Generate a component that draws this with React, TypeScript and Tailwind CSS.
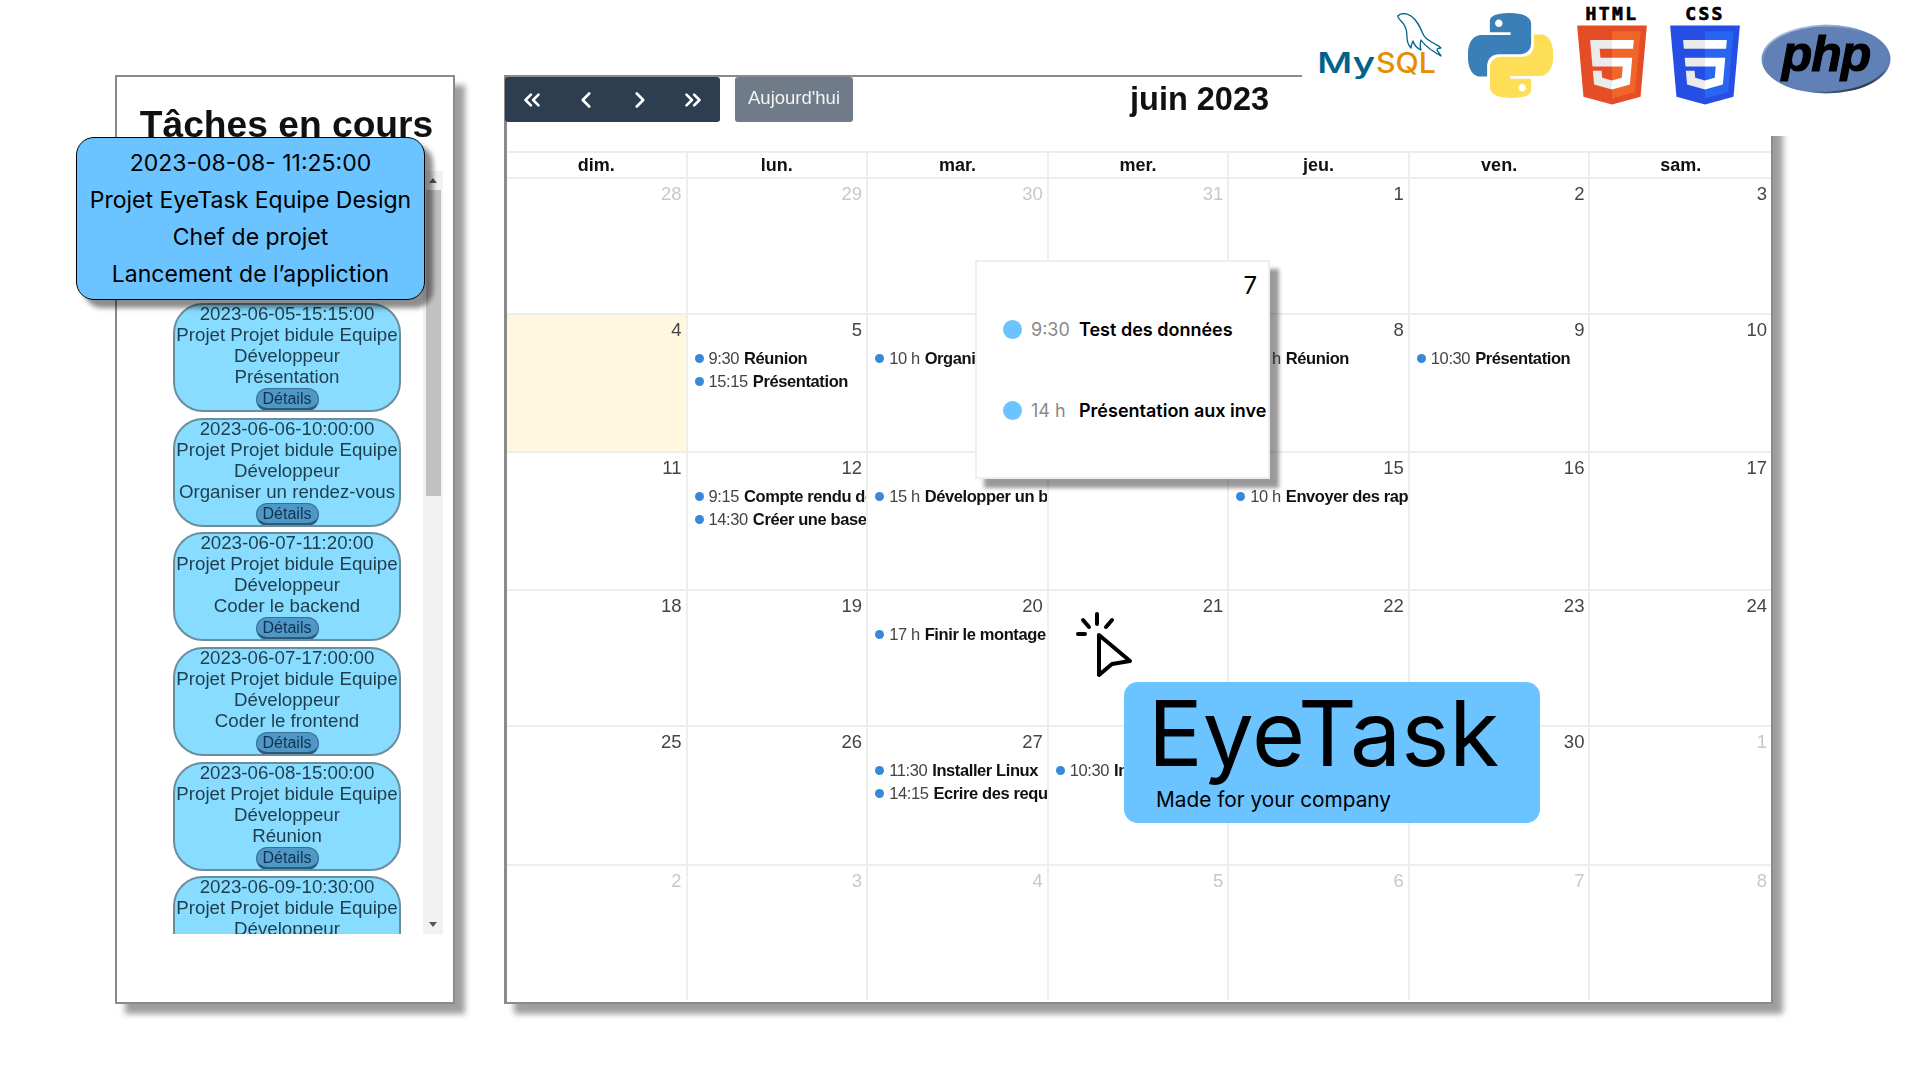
import { ChevronLeft, ChevronRight, ChevronsLeft, ChevronsRight } from "lucide-react";

type Ev = [string, string];
type Cell = { d: number; off?: boolean; today?: boolean; ev?: Ev[] };

const rows: { h: string; cells: Cell[] }[] = [
  { h: "h-[136px]", cells: [{ d: 28, off: true }, { d: 29, off: true }, { d: 30, off: true }, { d: 31, off: true }, { d: 1 }, { d: 2 }, { d: 3 }] },
  {
    h: "h-[138px]",
    cells: [
      { d: 4, today: true },
      { d: 5, ev: [["9:30", "Réunion"], ["15:15", "Présentation"]] },
      { d: 6, ev: [["10 h", "Organiser un rendez-vous"]] },
      { d: 7 },
      { d: 8, ev: [["15 h", "Réunion"]] },
      { d: 9, ev: [["10:30", "Présentation"]] },
      { d: 10 },
    ],
  },
  {
    h: "h-[138px]",
    cells: [
      { d: 11 },
      { d: 12, ev: [["9:15", "Compte rendu de réunion"], ["14:30", "Créer une base"]] },
      { d: 13, ev: [["15 h", "Développer un back"]] },
      { d: 14 },
      { d: 15, ev: [["10 h", "Envoyer des rapports"]] },
      { d: 16 },
      { d: 17 },
    ],
  },
  {
    h: "h-[136px]",
    cells: [{ d: 18 }, { d: 19 }, { d: 20, ev: [["17 h", "Finir le montage"]] }, { d: 21 }, { d: 22 }, { d: 23 }, { d: 24 }],
  },
  {
    h: "h-[139px]",
    cells: [
      { d: 25 },
      { d: 26 },
      { d: 27, ev: [["11:30", "Installer Linux"], ["14:15", "Ecrire des requêtes"]] },
      { d: 28, ev: [["10:30", "Installer"]] },
      { d: 29 },
      { d: 30 },
      { d: 1, off: true },
    ],
  },
];

const lastRow = [2, 3, 4, 5, 6, 7, 8];
const days = ["dim.", "lun.", "mar.", "mer.", "jeu.", "ven.", "sam."];

const tasks = [
  ["2023-06-05-15:15:00", "Présentation"],
  ["2023-06-06-10:00:00", "Organiser un rendez-vous"],
  ["2023-06-07-11:20:00", "Coder le backend"],
  ["2023-06-07-17:00:00", "Coder le frontend"],
  ["2023-06-08-15:00:00", "Réunion"],
  ["2023-06-09-10:30:00", "Présentation"],
];

const sans = "font-['Liberation_Sans',Arial,sans-serif]";
const inter = "font-['Inter',sans-serif]";

function TaskCard({ when, what }: { when: string; what: string }) {
  return (
    <div className="w-[228px] h-[109px] shrink-0 flex flex-col items-center rounded-[30px] border-2 border-[#6b8e9e] bg-[#87dcff] text-[18.7px] leading-[21px] text-[#1f3d4b] text-center overflow-hidden">
      <div className="-mt-[2px]">{when}</div>
      <div className="whitespace-nowrap">Projet Projet bidule Equipe</div>
      <div>Développeur</div>
      <div className="whitespace-nowrap">{what}</div>
      <div className="mt-[1px] w-[63px] h-[23px] rounded-full bg-[#4f97c6] border border-[#3a6f92] border-b-[3px] border-b-[#2d5a78] text-[16px] leading-[20px] font-medium text-[#0f3350]">
        Détails
      </div>
    </div>
  );
}

function TaskPanel() {
  return (
    <div className="w-[340px] h-[929px] shrink-0 bg-white border-2 border-[#8b8b8b] shadow-[10px_10px_6px_rgba(0,0,0,0.38)]">
      <div className={`blur-[0.5px] ${sans}`}>
        <h1 className="pt-[26px] pl-[3px] h-[94px] text-center text-[37.2px] leading-[42px] font-bold text-[#111] whitespace-nowrap">Tâches en cours</h1>
        <div className="flex h-[763px]">
          <div className="ml-[56px] w-[250px] h-full overflow-hidden flex flex-col gap-[5.7px] pt-[132px]">
            {tasks.map(([a, b]) => (
              <TaskCard key={a} when={a} what={b} />
            ))}
          </div>
          <div className="w-[20px] h-full bg-[#f1f1f1] flex flex-col items-center">
            <div className="h-[19px] flex items-center justify-center shrink-0">
              <div className="w-0 h-0 border-x-[4px] border-x-transparent border-b-[5px] border-b-[#555]" />
            </div>
            <div className="w-[15px] h-[306px] bg-[#c1c1c1]" />
            <div className="flex-1" />
            <div className="h-[19px] flex items-center justify-center shrink-0">
              <div className="w-0 h-0 border-x-[4px] border-x-transparent border-t-[5px] border-t-[#555]" />
            </div>
          </div>
        </div>
      </div>
    </div>
  );
}

function Calendar() {
  return (
    <div className="w-[1269px] h-[929px] shrink-0 bg-white border-2 border-l-[3px] border-[#8b8b8b] shadow-[10px_10px_6px_rgba(0,0,0,0.38)]">
      <div className={`blur-[0.5px] ${sans}`}>
        <div className="h-[74px] flex items-start -ml-[2px]">
          <div className="w-[215px] h-[45px] bg-[#2c3e50] rounded-[3px] flex items-center text-white">
            <div className="w-[54px] flex justify-center"><ChevronsLeft size={26} strokeWidth={2.4} /></div>
            <div className="w-[54px] flex justify-center"><ChevronLeft size={26} strokeWidth={2.4} /></div>
            <div className="w-[53px] flex justify-center"><ChevronRight size={26} strokeWidth={2.4} /></div>
            <div className="w-[54px] flex justify-center"><ChevronsRight size={26} strokeWidth={2.4} /></div>
          </div>
          <div className="ml-[15px] w-[118px] h-[45px] bg-[#6f7b89] rounded-[3px] text-center text-[18.5px] leading-[42px] text-[#f3f3f3]">
            Aujourd'hui
          </div>
          <div className="ml-[277px] mt-[2px] text-[32.5px] leading-[40px] font-bold text-[#111]">juin 2023</div>
        </div>
        <div className="grid grid-cols-7 h-[28px] border-y-2 border-[#eee]">
          {days.map((d) => (
            <div key={d} className="border-r-2 border-[#eee] last:border-r-0 text-center text-[18px] leading-[24px] font-bold text-[#111]">
              {d}
            </div>
          ))}
        </div>
        {rows.map((r, i) => (
          <div key={i} className={`grid grid-cols-7 ${r.h}`}>
            {r.cells.map((c, j) => (
              <div
                key={j}
                className={`min-w-0 overflow-hidden border-r-2 border-b-2 border-[#eee] last:border-r-0 ${c.today ? "bg-[#fff8de]" : ""}`}
              >
                <div className={`h-[32px] pr-[4px] pt-[3px] text-right text-[18.5px] leading-[24px] ${c.off ? "text-[#c8c8c8]" : "text-[#444]"}`}>
                  {c.d}
                </div>
                {c.ev?.map(([t, n]) => (
                  <div key={n} className="h-[23px] flex items-center pl-[7px] whitespace-nowrap text-[16.5px] tracking-[-0.4px]">
                    <span className="w-[9px] h-[9px] rounded-full bg-[#3788d8] shrink-0 mr-[5px]" />
                    <span className="text-[#444] mr-[5px]">{t}</span>
                    <span className="font-bold text-[#111]">{n}</span>
                  </div>
                ))}
              </div>
            ))}
          </div>
        ))}
        <div className="grid grid-cols-7 h-[134px]">
          {lastRow.map((d) => (
            <div key={d} className="border-r-2 border-[#eee] last:border-r-0">
              <div className="h-[31px] pr-[4px] pt-[3px] text-right text-[18.5px] leading-[24px] text-[#c8c8c8]">{d}</div>
            </div>
          ))}
        </div>
      </div>
    </div>
  );
}

function MySqlLogo() {
  const font = "'Inter', sans-serif";
  return (
    <svg width="126" height="66" viewBox="0 0 126 66" className="shrink-0">
      <g transform="translate(80 0)" fill="none" stroke="#00618a" strokeWidth="1.3" strokeLinejoin="round" strokeLinecap="round">
        <path d="M0.7 3 C4 0 9 0 14 3 C20 7 23 14 26 21 C28 26 33 28 38 31 C40 32 43 33 44 35 C41 35 40 36 40 37 C41 39 43 41 44 43 C40 41 36 38 33 36 C29 33 26 30 24 27 C23 31 23 34 24 37 C20 35 17 32 16 28 C15 30 14 32 14 35 C11 32 10 28 10 24 C10 18 9 13 5 9 C3 7 1 5 0.7 3 Z" />
      </g>
      <text x="0" y="60" fontFamily={font} fontWeight="500" fontSize="28" fill="#00618a" stroke="#00618a" strokeWidth="0.2" textLength="58" lengthAdjust="spacingAndGlyphs">My</text>
      <text x="59" y="60" fontFamily={font} fontWeight="500" fontSize="28" fill="#e48e00" textLength="60" lengthAdjust="spacingAndGlyphs">SQL</text>
    </svg>
  );
}

function PythonLogo() {
  return (
    <svg width="85" height="85" viewBox="0 0 24 24" className="shrink-0">
      <path fill="#3a7fb8" fillRule="evenodd" d="M14.25.18l.9.2.73.26.59.3.45.32.34.34.25.34.16.33.1.3.04.26.02.2-.01.13V8.5l-.05.63-.13.55-.21.46-.26.38-.3.31-.33.25-.35.19-.35.14-.33.1-.3.07-.26.04-.21.02H8.77l-.69.05-.59.14-.5.22-.41.27-.33.32-.27.35-.2.36-.15.37-.1.35-.07.32-.04.27-.02.21v3.06H3.17l-.21-.03-.28-.07-.32-.12-.35-.18-.36-.26-.36-.36-.35-.46-.32-.59-.28-.73-.21-.88-.14-1.05-.05-1.23.06-1.22.16-1.04.24-.87.32-.71.36-.57.4-.44.42-.33.42-.24.4-.16.36-.1.32-.05.24-.01h.16l.06.01h8.16v-.83H6.18l-.01-2.75-.02-.37.05-.34.11-.31.17-.28.25-.26.31-.23.38-.2.44-.18.51-.15.58-.12.64-.1.71-.06.77-.04.84-.02 1.27.05zm-6.3 1.98l-.23.33-.08.41.08.41.23.34.33.22.41.09.41-.09.33-.22.23-.34.08-.41-.08-.41-.23-.33-.33-.22-.41-.09-.41.09z" />
      <path fill="#ffde57" fillRule="evenodd" d="M21.04 6.11l.28.06.32.12.35.18.36.27.36.35.35.47.32.59.28.73.21.88.14 1.04.05 1.23-.06 1.23-.16 1.04-.24.86-.32.71-.36.57-.4.45-.42.33-.42.24-.4.16-.36.09-.32.05-.24.02-.16-.01h-8.22v.82h5.84l.01 2.76.02.36-.05.34-.11.31-.17.29-.25.25-.31.24-.38.2-.44.17-.51.15-.58.13-.64.09-.71.07-.77.04-.84.01-1.27-.04-1.07-.14-.9-.2-.73-.25-.59-.3-.45-.33-.34-.34-.25-.34-.16-.33-.1-.3-.04-.25-.02-.2.01-.13v-5.34l.05-.64.13-.54.21-.46.26-.38.3-.32.33-.24.35-.2.35-.14.33-.1.3-.06.26-.04.21-.02.13-.01h5.84l.69-.05.59-.14.5-.21.41-.28.33-.32.27-.35.2-.36.15-.36.1-.35.07-.32.04-.28.02-.21V6.07h2.09l.14.01zm-6.47 14.25l-.23.33-.08.41.08.41.23.33.33.23.41.08.41-.08.33-.23.23-.33.08-.41-.08-.41-.23-.33-.33-.23-.41-.08-.41.08z" />
    </svg>
  );
}

function Shield({ label, outer, inner, html }: { label: string; outer: string; inner: string; html: boolean }) {
  return (
    <div className="w-[70px] shrink-0 flex flex-col items-center">
      <div className="h-[18px] whitespace-nowrap text-[18px] leading-[14px] font-bold tracking-[2.4px] text-black [-webkit-text-stroke:0.7px_black] font-['DejaVu_Sans_Mono',monospace]">{label}</div>
      <svg width="70" height="80" viewBox="74 100 364 412">
        <polygon fill={outer} points="107.644,470.877 74.633,100.62 437.367,100.62 404.321,470.819 255.778,512" />
        <polygon fill={inner} points="256,480.523 376.03,447.246 404.27,130.894 256,130.894" />
        {html ? (
          <polygon fill="#ebebeb" points="256,268.217 195.91,268.217 191.76,221.716 256,221.716 256,176.305 142.132,176.305 143.219,188.488 154.38,313.627 256,313.627" />
        ) : (
          <polygon fill="#ebebeb" points="150.31,268.217 154.38,313.627 256,313.627 256,268.217" />
        )}
        {!html && <polygon fill="#ebebeb" points="142.132,176.305 146.26,221.716 256,221.716 256,176.305" />}
        <polygon fill="#ebebeb" points="256,386.153 255.801,386.206 205.227,372.55 201.994,336.333 156.409,336.333 162.771,407.634 255.791,433.457 256,433.399" />
        <polygon fill="#fff" points="255.843,268.217 255.843,313.627 311.761,313.627 306.49,372.521 255.843,386.191 255.843,433.435 348.937,407.634 360.291,280.411 361.399,268.217" />
        <polygon fill="#fff" points="255.843,176.305 255.843,221.716 365.531,221.716 369.597,176.305" />
      </svg>
    </div>
  );
}

function PhpLogo() {
  return (
    <svg width="130" height="70" viewBox="0 0 130 70" className="shrink-0">
      <defs>
        <linearGradient id="phpEdge" x1="0.2" y1="0" x2="0.8" y2="1">
          <stop offset="0" stopColor="#c5d2e6" />
          <stop offset="0.35" stopColor="#6181b6" />
          <stop offset="0.8" stopColor="#5d7db2" />
          <stop offset="1" stopColor="#111" />
        </linearGradient>
      </defs>
      <ellipse cx="65" cy="35" rx="64.5" ry="34.5" fill="url(#phpEdge)" />
      <ellipse cx="64.5" cy="35" rx="62" ry="32.5" fill="#6181b6" />
      <text x="65" y="47" textAnchor="middle" fontFamily="'Liberation Sans', sans-serif" fontWeight="700" fontStyle="italic" fontSize="50" letterSpacing="-1" fill="#000" stroke="#000" strokeWidth="1.1">
        php
      </text>
    </svg>
  );
}

export default function App() {
  return (
    <div className="relative w-[1920px] h-[1080px] bg-white overflow-hidden">
      <div className="flex gap-[49px] pl-[115px] pt-[75px]">
        <TaskPanel />
        <Calendar />
      </div>

      {/* logo strip lying over the calendar's top edge */}
      <div className="absolute left-[1302px] top-0 w-[618px] h-[136px] bg-white flex items-start pl-[15px] pt-[7px]">
        <div className="mt-[6px]"><MySqlLogo /></div>
        <div className="ml-[25px] mt-[6px]"><PythonLogo /></div>
        <div className="ml-[24px]"><Shield label="HTML" outer="#e44d26" inner="#f16529" html /></div>
        <div className="ml-[23px]"><Shield label="CSS" outer="#264de4" inner="#2965f1" html={false} /></div>
        <div className="ml-[21px] mt-[17px]"><PhpLogo /></div>
      </div>

      {/* selected task tooltip */}
      <div className={`absolute left-[76px] top-[137px] w-[349px] h-[163px] pt-[7px] rounded-[18px] border border-black bg-[#6bc4ff] shadow-[8px_8px_5px_rgba(0,0,0,0.45)] text-center text-[23px] leading-[37px] text-black ${inter}`}>
        <div>2023-08-08- 11:25:00</div>
        <div>Projet EyeTask Equipe Design</div>
        <div>Chef de projet</div>
        <div>Lancement de l’appliction</div>
      </div>

      {/* day popover */}
      <div className={`absolute left-[975px] top-[260px] w-[295px] h-[219px] overflow-hidden bg-white border-2 border-[#eee] shadow-[9px_9px_4px_rgba(0,0,0,0.4)] ${inter}`}>
        <div className="pr-[11px] pt-[9px] text-right text-[24px] leading-[30px] text-black">7</div>
        <div className="mt-[13px] mr-[2px] h-[30px] overflow-hidden flex items-center pl-[26px] whitespace-nowrap text-[18px]">
          <span className="w-[19px] h-[19px] rounded-full bg-[#6bc4ff] shrink-0" />
          <span className="ml-[9px] w-[48px] shrink-0 text-[#888]">9:30</span>
          <span className="font-semibold text-black">Test des données</span>
        </div>
        <div className="mt-[51px] mr-[2px] h-[30px] overflow-hidden flex items-center pl-[26px] whitespace-nowrap text-[18px]">
          <span className="w-[19px] h-[19px] rounded-full bg-[#6bc4ff] shrink-0" />
          <span className="ml-[9px] w-[48px] shrink-0 text-[#888]">14 h</span>
          <span className="font-semibold text-black">Présentation aux investisseurs</span>
        </div>
      </div>

      {/* click cursor */}
      <svg className="absolute left-[1070px] top-[608px]" width="70" height="74" viewBox="0 0 70 74" fill="none" stroke="#000" strokeWidth="4" strokeLinecap="round" strokeLinejoin="round">
        <path d="M27 6 V16" />
        <path d="M13 12 L19 19" />
        <path d="M42 12 L36 19" />
        <path d="M8 26 H15" />
        <path d="M29 27 L60 53 L42 56 L29 67 Z" />
      </svg>

      {/* EyeTask brand card */}
      <div className={`absolute left-[1124px] top-[682px] w-[416px] h-[141px] rounded-[14px] bg-[#6bc4ff] text-black ${inter}`}>
        <div className="pl-[24px] pt-[1px] text-[91px] leading-[100px]">EyeTask</div>
        <div className="pl-[32px] pt-[3px] text-[20.8px] leading-[28px] whitespace-nowrap">Made for your company</div>
      </div>
    </div>
  );
}
